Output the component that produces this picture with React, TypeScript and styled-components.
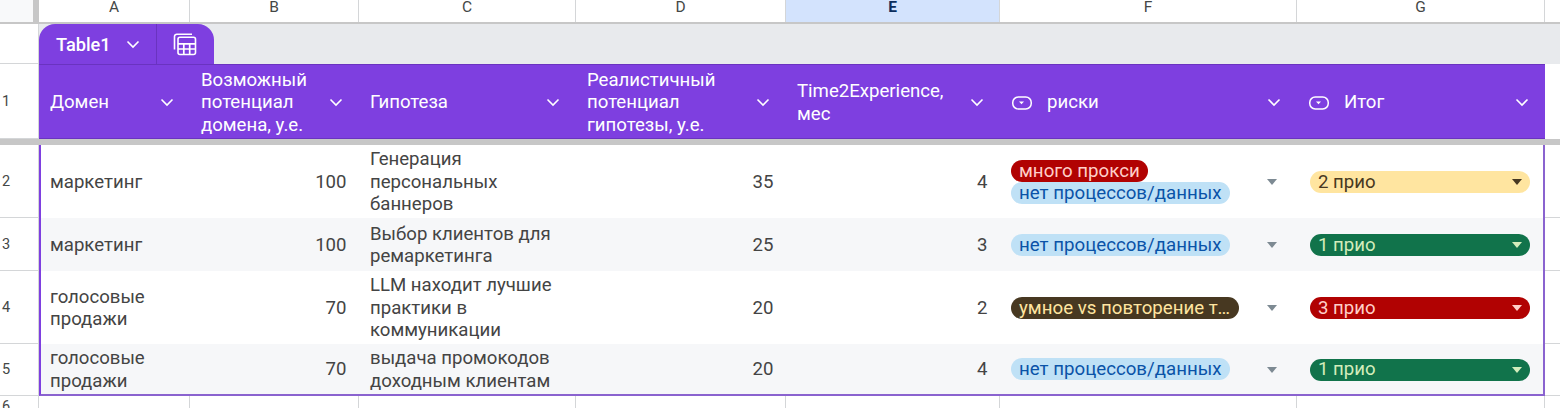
import React from 'react';
import styled, { createGlobalStyle } from 'styled-components';

const COLUMNS = '151px 169px 217px 210px 214px 297px 248px';
const DATA_COLUMNS = '149px 169px 217px 210px 214px 297px 248px';
const PURPLE = '#7e3fe0';
const GRID = '#d4d6d8';

const GlobalStyle = createGlobalStyle`
  html, body {
    margin: 0;
    height: 408px;
    overflow: hidden;
    background: #fff;
    font-family: Roboto, "Liberation Sans", sans-serif;
  }
  * { box-sizing: border-box; }
`;

const Sheet = styled.div`
  width: 1560px;
  height: 408px;
  overflow: hidden;
`;

const Line = styled.div`
  display: grid;
  grid-template-columns: 39px 1506px 15px;
`;

const Corner = styled.div`
  height: 24px;
  background: #f8f9fa;
  border-right: 6px solid #c7c7c7;
  border-bottom: 2px solid #c7c7c7;
`;

const Letters = styled.div`
  display: grid;
  grid-template-columns: ${COLUMNS};
  height: 24px;
  border-bottom: 2px solid #c7c7c7;
`;

const Letter = styled.div<{ $active?: boolean }>`
  display: flex;
  align-items: center;
  justify-content: center;
  height: 22px;
  padding-bottom: 8px;
  font-size: 15.5px;
  line-height: 14px;
  color: ${(p) => (p.$active ? '#0b2d5c' : '#444746')};
  font-weight: ${(p) => (p.$active ? 700 : 400)};
  background: ${(p) => (p.$active ? '#d3e3fd' : '#fff')};
  border-right: 1px solid ${GRID};
`;

const LetterTail = styled.div`
  height: 24px;
  border-bottom: 2px solid #c7c7c7;
`;

const RowNum = styled.div<{ $h: number }>`
  height: ${(p) => p.$h}px;
  display: flex;
  align-items: center;
  padding-left: 2px;
  font-size: 14.5px;
  color: #444746;
  border-right: 1px solid ${GRID};
  border-bottom: 1px solid ${GRID};
`;

const TabStrip = styled.div`
  height: 40px;
  background: #e8eaed;
  display: flex;
`;

const TabTail = styled.div`
  height: 40px;
  background: #e8eaed;
`;

const Tab = styled.div`
  display: flex;
  height: 40px;
  width: 175px;
  background: ${PURPLE};
  border-radius: 16px 16px 0 0;
  color: #fff;
`;

const TabName = styled.div`
  width: 118px;
  display: flex;
  align-items: center;
  gap: 15px;
  padding-left: 17px;
  font-size: 18.2px;
  font-weight: 500;
  border-right: 1px solid #6a33c0;
`;

const TabIcon = styled.div`
  flex: 1;
  display: flex;
  align-items: center;
  justify-content: center;
  padding-right: 2px;
`;

const HeadRow = styled.div`
  display: grid;
  grid-template-columns: ${COLUMNS};
  height: 75px;
  background: ${PURPLE};
  border-top: 1px solid #6a33c0;
  border-bottom: 1px solid #6a33c0;
`;

const HeadCell = styled.div`
  display: flex;
  align-items: center;
  padding: 2px 16px 0 11px;
  color: #fff;
  font-size: 18.6px;
  line-height: 22.5px;
`;

const HeadText = styled.div<{ $chip?: boolean }>`
  flex: 1;
  padding-left: ${(p) => (p.$chip ? '15px' : '0')};
  padding-right: 8px;
`;

const Freeze = styled.div`
  grid-column: 1 / -1;
  height: 6px;
  background: #c7c7c7;
`;

const DataRow = styled.div<{ $h: number; $alt: boolean; $last: boolean }>`
  display: grid;
  grid-template-columns: ${DATA_COLUMNS};
  height: ${(p) => p.$h}px;
  background: ${(p) => (p.$alt ? '#f6f7f9' : '#fff')};
  border-left: 2px solid ${PURPLE};
  border-right: 2px solid #8a63cf;
  border-bottom: ${(p) => (p.$last ? '2px solid #8a63cf' : 'none')};
`;

const Cell = styled.div<{ $right?: boolean }>`
  display: flex;
  align-items: center;
  justify-content: ${(p) => (p.$right ? 'flex-end' : 'flex-start')};
  padding: 1px ${(p) => (p.$right ? '12.5px' : '11px')} 0 11px;
  font-size: 18.6px;
  line-height: 22.5px;
  color: #444;
  min-width: 0;
`;

const FirstCell = styled(Cell)`
  padding-left: 9px;
`;

const ChipStack = styled.div`
  flex: 1;
  min-width: 0;
  display: flex;
  flex-direction: column;
  align-items: flex-start;
  padding-bottom: 1px;
`;

const palette = {
  red: { bg: '#b10202', fg: '#ffcfc9' },
  blue: { bg: '#bfe1f6', fg: '#0a53a8' },
  brown: { bg: '#473821', fg: '#ffe5a0' },
  yellow: { bg: '#ffe5a0', fg: '#473821' },
  green: { bg: '#11734b', fg: '#d4edbc' },
};

type Tone = keyof typeof palette;

const Chip = styled.div<{ $tone: Tone }>`
  max-width: 228px;
  height: 22px;
  line-height: 22px;
  padding: 0 8px;
  border-radius: 11px;
  font-size: 18.7px;
  white-space: nowrap;
  overflow: hidden;
  text-overflow: ellipsis;
  background: ${(p) => palette[p.$tone].bg};
  color: ${(p) => palette[p.$tone].fg};
`;

const Arrow = styled.div<{ $color: string }>`
  width: 0;
  height: 0;
  flex: none;
  border-left: 5.5px solid transparent;
  border-right: 5.5px solid transparent;
  border-top: 6px solid ${(p) => p.$color};
`;

const RiskArrow = styled.div`
  flex: none;
  margin-right: 9px;
`;

const Status = styled.div<{ $tone: Tone }>`
  flex: 1;
  margin: 0 4px 0 2px;
  height: 22px;
  display: flex;
  align-items: center;
  justify-content: space-between;
  padding: 0 8px;
  border-radius: 11px;
  background: ${(p) => palette[p.$tone].bg};
  color: ${(p) => palette[p.$tone].fg};
`;

const TailRow = styled.div<{ $h: number }>`
  height: ${(p) => p.$h}px;
  border-bottom: 1px solid ${GRID};
`;

const EmptyGrid = styled.div`
  display: grid;
  grid-template-columns: ${COLUMNS};
  height: 21px;
`;

const EmptyCell = styled.div`
  border-right: 1px solid ${GRID};
`;

const Chevron = () => (
  <svg width="14" height="9" viewBox="0 0 14 9" fill="none" style={{ flex: 'none' }}>
    <path d="M1.5 1.5 7 7l5.500-5.500" stroke="#fff" strokeWidth="1.6" />
  </svg>
);

const ChipIcon = () => (
  <svg width="21" height="16" viewBox="0 0 21 16" fill="none" style={{ flex: 'none' }}>
    <rect x="1.750" y="2" width="18.500" height="12" rx="5.500" stroke="#fff" strokeWidth="1.500" />
    <path d="M8 6.500h5L10.500 9.200z" fill="#fff" />
  </svg>
);

const TableIcon = () => (
  <svg width="25" height="25" viewBox="0 0 25 25" fill="none">
    <path d="M2.500 17.500V4.500A2.300 2.300 0 0 1 4.800 2.200H20" stroke="#fff" strokeWidth="1.600" />
    <rect x="6" y="5.200" width="17.500" height="17.300" rx="2" stroke="#fff" strokeWidth="1.600" />
    <path d="M6 11.800h17.500M6 17h17.500M11.800 11.800v10.700M17.700 11.800v10.700" stroke="#fff" strokeWidth="1.700" />
  </svg>
);

const letters = ['A', 'B', 'C', 'D', 'E', 'F', 'G'];

const headers = [
  { title: 'Домен' },
  { title: 'Возможный потенциал домена, у.е.' },
  { title: 'Гипотеза' },
  { title: 'Реалистичный потенциал гипотезы, у.е.' },
  { title: 'Time2Experience, мес' },
  { title: 'риски', chip: true },
  { title: 'Итог', chip: true },
];

const rows: {
  num: number;
  h: number;
  domain: string;
  potential: number;
  idea: string;
  real: number;
  time: number;
  risks: { label: string; tone: Tone }[];
  total: { label: string; tone: Tone };
}[] = [
  {
    num: 2,
    h: 73,
    domain: 'маркетинг',
    potential: 100,
    idea: 'Генерация персональных баннеров',
    real: 35,
    time: 4,
    risks: [
      { label: 'много прокси', tone: 'red' },
      { label: 'нет процессов/данных', tone: 'blue' },
    ],
    total: { label: '2 прио', tone: 'yellow' },
  },
  {
    num: 3,
    h: 53,
    domain: 'маркетинг',
    potential: 100,
    idea: 'Выбор клиентов для ремаркетинга',
    real: 25,
    time: 3,
    risks: [{ label: 'нет процессов/данных', tone: 'blue' }],
    total: { label: '1 прио', tone: 'green' },
  },
  {
    num: 4,
    h: 73,
    domain: 'голосовые продажи',
    potential: 70,
    idea: 'LLM находит лучшие практики в коммуникации',
    real: 20,
    time: 2,
    risks: [{ label: 'умное vs повторение топа', tone: 'brown' }],
    total: { label: '3 прио', tone: 'red' },
  },
  {
    num: 5,
    h: 52,
    domain: 'голосовые продажи',
    potential: 70,
    idea: 'выдача промокодов доходным клиентам',
    real: 20,
    time: 4,
    risks: [{ label: 'нет процессов/данных', tone: 'blue' }],
    total: { label: '1 прио', tone: 'green' },
  },
];

const App = () => {
  return (
    <Sheet>
      <GlobalStyle />
      <Line>
        <Corner />
        <Letters>
          {letters.map((l) => (
            <Letter key={l} $active={l === 'E'}>
              {l}
            </Letter>
          ))}
        </Letters>
        <LetterTail />
      </Line>
      <Line>
        <RowNum $h={40} />
        <TabStrip>
          <Tab>
            <TabName>
              Table1
              <Chevron />
            </TabName>
            <TabIcon>
              <TableIcon />
            </TabIcon>
          </Tab>
        </TabStrip>
        <TabTail />
      </Line>
      <Line>
        <RowNum $h={75}>1</RowNum>
        <HeadRow>
          {headers.map((h) => (
            <HeadCell key={h.title}>
              {h.chip && <ChipIcon />}
              <HeadText $chip={h.chip}>{h.title}</HeadText>
              <Chevron />
            </HeadCell>
          ))}
        </HeadRow>
        <div />
        <Freeze />
      </Line>
      {rows.map((r, i) => (
        <Line key={r.num}>
          <RowNum $h={r.h}>{r.num}</RowNum>
          <DataRow $h={r.h} $alt={i % 2 === 1} $last={i === rows.length - 1}>
            <FirstCell>{r.domain}</FirstCell>
            <Cell $right>{r.potential}</Cell>
            <Cell>{r.idea}</Cell>
            <Cell $right>{r.real}</Cell>
            <Cell $right>{r.time}</Cell>
            <Cell>
              <ChipStack>
                {r.risks.map((c) => (
                  <Chip key={c.label} $tone={c.tone}>
                    {c.label}
                  </Chip>
                ))}
              </ChipStack>
              <RiskArrow>
                <Arrow $color="#7d8a93" />
              </RiskArrow>
            </Cell>
            <Cell>
              <Status $tone={r.total.tone}>
                {r.total.label}
                <Arrow $color={palette[r.total.tone].fg} />
              </Status>
            </Cell>
          </DataRow>
          <TailRow $h={r.h} />
        </Line>
      ))}
      <Line>
        <RowNum $h={21}>6</RowNum>
        <EmptyGrid>
          {letters.map((l) => (
            <EmptyCell key={l} />
          ))}
        </EmptyGrid>
      </Line>
    </Sheet>
  );
};

export default App;
